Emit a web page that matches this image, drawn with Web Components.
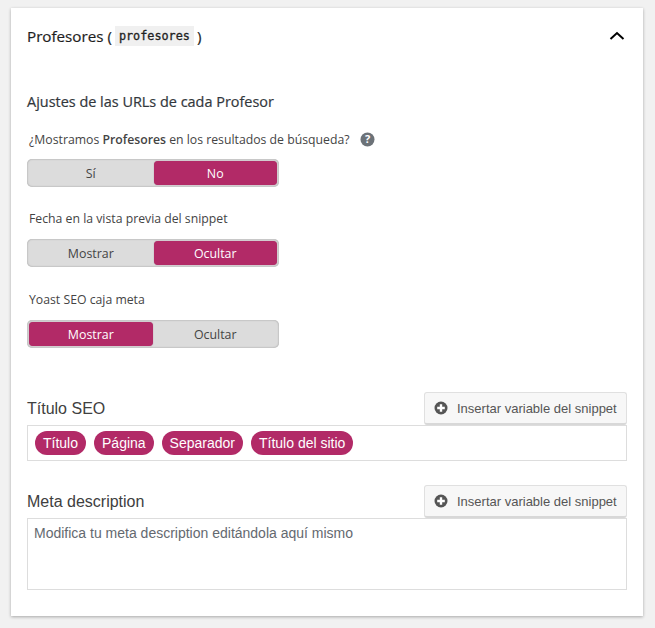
<!DOCTYPE html>
<html lang="es">
<head>
<meta charset="utf-8">
<title>Profesores</title>
<style>
  html, body { margin: 0; padding: 0; background: #f1f1f1; }
  body { padding: 8px 12px 12px 11px; font-family: "Open Sans", "Noto Sans", sans-serif; }
</style>
</head>
<body>
<settings-card>
  <span slot="title">Profesores</span>
  <span slot="slug">profesores</span>

  <section-title>Ajustes de las URLs de cada Profesor</section-title>

  <toggle-field first="Sí" second="No" selected="2" help>¿Mostramos <b>Profesores</b> en los resultados de búsqueda?</toggle-field>
  <toggle-field first="Mostrar" second="Ocultar" selected="2" style="margin-top:21px;--label-gap:11px">Fecha en la vista previa del snippet</toggle-field>
  <toggle-field first="Mostrar" second="Ocultar" selected="1" style="margin-top:22px;--label-gap:11px">Yoast SEO caja meta</toggle-field>

  <snippet-field label="Título SEO" style="margin-top:44px">
    <variable-pill>Título</variable-pill>
    <variable-pill>Página</variable-pill>
    <variable-pill>Separador</variable-pill>
    <variable-pill>Título del sitio</variable-pill>
  </snippet-field>

  <snippet-field label="Meta description" tall style="margin-top:24px">
    <span class="placeholder" style="color:#646970">Modifica tu meta description editándola aquí mismo</span>
  </snippet-field>
</settings-card>

<script>
class SettingsCard extends HTMLElement {
    constructor() {
        super();
        this.attachShadow({ mode: 'open' });
        this.shadowRoot.innerHTML = `
        <style>
            :host {
                display: block;
                width: 632px;
                height: 608px;
                box-sizing: border-box;
                padding: 0 16px;
                background: #fff;
                box-shadow: 0 1px 3px rgba(0, 0, 0, 0.3);
                color: #32373c;
            }
            header {
                display: flex;
                align-items: center;
                justify-content: space-between;
                height: 55px;
                color: #1e1e1e;
                font-size: 15.2px;
                -webkit-text-stroke: 0.2px #1e1e1e;
            }
            h2 { margin: 0; font: inherit; display: flex; align-items: center; }
            code {
                font-family: "DejaVu Sans Mono", monospace;
                font-size: 11.8px;
                font-weight: 400;
                background: #f0f0f0;
                padding: 3px 4px 2px;
                margin: 0 3px 0 3px;
                line-height: 15px;
                color: #222;
                -webkit-text-stroke: 0.3px #222;
            }
            svg { display: block; margin-right: 2px; }
        </style>
        <header>
            <h2><slot name="title"></slot>&nbsp;(<code><slot name="slug"></slot></code>)</h2>
            <svg width="16" height="16" viewBox="0 0 16 16" fill="none" stroke="#000" stroke-width="2"><path d="M1.5 11 8 5l6.5 6"/></svg>
        </header>
        <slot></slot>`;
    }
}

class SectionTitle extends HTMLElement {
    constructor() {
        super();
        this.attachShadow({ mode: 'open' });
        this.shadowRoot.innerHTML = `
        <style>
            :host {
                display: block;
                margin-top: 29px;
                font-size: 14.45px;
                line-height: 20px;
                color: #32373c;
                -webkit-text-stroke: 0.2px #32373c;
            }
        </style>
        <slot></slot>`;
    }
}

class ToggleField extends HTMLElement {
    constructor() {
        super();
        this.attachShadow({ mode: 'open' });
    }

    connectedCallback() {
        const selected = this.getAttribute('selected');
        const help = this.hasAttribute('help') ? `
            <svg width="15" height="15" viewBox="0 0 15 15">
                <circle cx="7.5" cy="7.5" r="7" fill="#6c7278"/>
                <text x="7.5" y="11.4" text-anchor="middle" fill="#fff" font-size="11" font-weight="700" font-family="Open Sans, sans-serif">?</text>
            </svg>` : '';
        this.shadowRoot.innerHTML = `
        <style>
            :host {
                display: block;
                margin-top: 17px;
                font-size: 12.25px;
                color: #444;
            }
            .label {
                display: flex;
                align-items: center;
                gap: 11px;
                height: 20px;
                padding-left: 2px;
            }
            ::slotted(b) { font-weight: 600; }
            .switch {
                display: grid;
                grid-template-columns: 1fr 1fr;
                gap: 1px;
                box-sizing: border-box;
                width: 252px;
                height: 28px;
                margin-top: var(--label-gap, 10px);
                padding: 2px;
                background: #dcdcdc;
                border-radius: 5px;
                box-shadow: inset 0 0 2px rgba(0, 0, 0, 0.35);
                font-size: 12.4px;
            }
            .switch span {
                display: flex;
                align-items: center;
                justify-content: center;
                border-radius: 4px;
                color: #444;
            }
            .switch span.on {
                background: #b22a67;
                color: #fff;
                box-shadow: 0 0 1px rgba(120, 20, 70, 0.6);
            }
        </style>
        <div class="label"><span><slot></slot></span>${help}</div>
        <div class="switch">
            <span class="${selected === '1' ? 'on' : ''}">${this.getAttribute('first')}</span>
            <span class="${selected === '2' ? 'on' : ''}">${this.getAttribute('second')}</span>
        </div>`;
    }
}

class SnippetField extends HTMLElement {
    constructor() {
        super();
        this.attachShadow({ mode: 'open' });
    }

    connectedCallback() {
        const tall = this.hasAttribute('tall');
        this.shadowRoot.innerHTML = `
        <style>
            :host {
                display: block;
                font-family: "Liberation Sans", Arial, sans-serif;
            }
            .top {
                display: flex;
                align-items: center;
                justify-content: space-between;
                height: 33px;
            }
            label { font-size: 16px; color: #404040; }
            button {
                display: flex;
                align-items: center;
                gap: 9px;
                box-sizing: border-box;
                height: 33px;
                width: 203px;
                padding: 0 0 0 9px;
                background: #f7f7f7;
                border: 1px solid #e0e0e0;
                border-bottom: 2px solid #d8d8d8;
                border-radius: 3px;
                color: #555;
                font: 13px "Liberation Sans", Arial, sans-serif;
                white-space: nowrap;
            }
            .box {
                box-sizing: border-box;
                border: 1px solid #ddd;
                height: ${tall ? 72 : 36}px;
                padding: ${tall ? '6px 6px' : '0 7px'};
                display: flex;
                gap: 8px;
                align-items: ${tall ? 'flex-start' : 'center'};
                font-size: 14px;
                line-height: 16px;
            }
        </style>
        <div class="top">
            <label>${this.getAttribute('label')}</label>
            <button>
                <svg width="14" height="14" viewBox="0 0 14 14">
                    <circle cx="7" cy="7" r="6.5" fill="#555"/>
                    <path d="M7 3.2v7.6M3.2 7h7.6" stroke="#fff" stroke-width="2.4"/>
                </svg>
                Insertar variable del snippet
            </button>
        </div>
        <div class="box"><slot></slot></div>`;
    }
}

class VariablePill extends HTMLElement {
    constructor() {
        super();
        this.attachShadow({ mode: 'open' });
        this.shadowRoot.innerHTML = `
        <style>
            :host {
                display: block;
                height: 24px;
                padding: 0 8px;
                border-radius: 12px;
                background: #b22a67;
                color: #fff;
                font-size: 14px;
                line-height: 24px;
                white-space: nowrap;
            }
        </style>
        <slot></slot>`;
    }
}

customElements.define('settings-card', SettingsCard);
customElements.define('section-title', SectionTitle);
customElements.define('toggle-field', ToggleField);
customElements.define('snippet-field', SnippetField);
customElements.define('variable-pill', VariablePill);
</script>
</body>
</html>
